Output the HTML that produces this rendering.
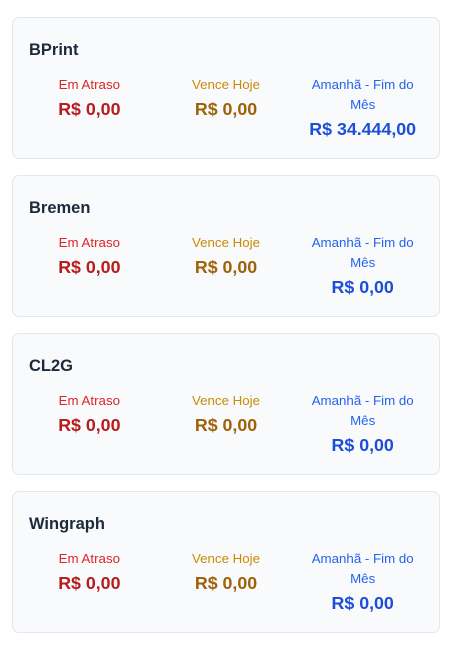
<!DOCTYPE html>
<html><head><meta charset="utf-8"><style>
body{margin:0;background:#fff;font-family:"Liberation Sans",sans-serif;}
.card{position:absolute;left:12px;width:428px;height:142px;box-sizing:border-box;border:1px solid #e2e8f0;border-radius:7px;background:#f8fafc;padding:21px 16px 0 16px;}
.t{font-size:16.5px;font-weight:bold;color:#1e293b;line-height:22px;}
.row{display:flex;gap:16px;margin-top:14px;}
.col{flex:1;text-align:center;}
.l{font-size:13.3px;line-height:20px;}
.v{font-size:17.8px;font-weight:bold;line-height:24px;margin-top:2px;}
.r .l{color:#dc2626}.r .v{color:#b91c1c}
.y .l{color:#ca8a04}.y .v{color:#a16207}
.b .l{color:#2563eb}.b .v{color:#1d4ed8}
</style></head><body>
<div class="card" style="top:17px"><div class="t">BPrint</div><div class="row"><div class="col r"><div class="l">Em Atraso</div><div class="v">R$ 0,00</div></div><div class="col y"><div class="l">Vence Hoje</div><div class="v">R$ 0,00</div></div><div class="col b"><div class="l">Amanhã - Fim do Mês</div><div class="v">R$ 34.444,00</div></div></div></div>
<div class="card" style="top:175px"><div class="t">Bremen</div><div class="row"><div class="col r"><div class="l">Em Atraso</div><div class="v">R$ 0,00</div></div><div class="col y"><div class="l">Vence Hoje</div><div class="v">R$ 0,00</div></div><div class="col b"><div class="l">Amanhã - Fim do Mês</div><div class="v">R$ 0,00</div></div></div></div>
<div class="card" style="top:333px"><div class="t">CL2G</div><div class="row"><div class="col r"><div class="l">Em Atraso</div><div class="v">R$ 0,00</div></div><div class="col y"><div class="l">Vence Hoje</div><div class="v">R$ 0,00</div></div><div class="col b"><div class="l">Amanhã - Fim do Mês</div><div class="v">R$ 0,00</div></div></div></div>
<div class="card" style="top:491px"><div class="t">Wingraph</div><div class="row"><div class="col r"><div class="l">Em Atraso</div><div class="v">R$ 0,00</div></div><div class="col y"><div class="l">Vence Hoje</div><div class="v">R$ 0,00</div></div><div class="col b"><div class="l">Amanhã - Fim do Mês</div><div class="v">R$ 0,00</div></div></div></div>
</body></html>
